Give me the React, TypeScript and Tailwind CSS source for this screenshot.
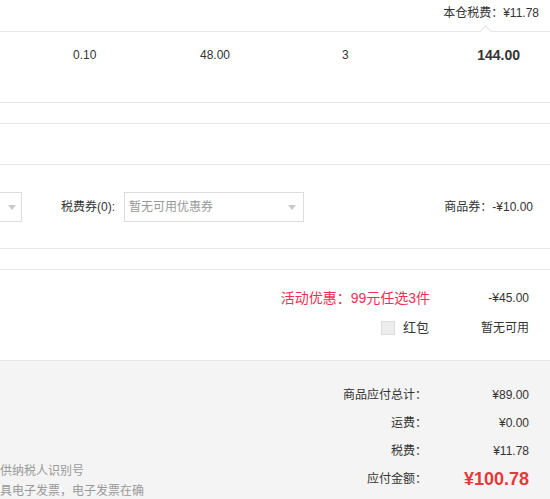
import React from "react";

const FONT = { fontFamily: '"Liberation Sans", Arial, "Noto Sans CJK SC", sans-serif' };

function Caret() {
    return (
        <svg width="8" height="5" viewBox="0 0 8 5" className="shrink-0">
            <path d="M0 0 L8 0 L4 5 Z" fill="#c9c9c9" />
        </svg>
    );
}

function SummaryRow({ label, value, big }: { label: string; value: string; big?: boolean }) {
    return (
        <div className="h-[28px] flex items-center">
            <div className="w-[120px] text-right text-[12px] text-[#333]">{label}</div>
            <div className={`w-[102px] text-right ${big ? "text-[18px] font-bold text-[#e4393c]" : "text-[12px] text-[#333]"}`}>
                {value}
            </div>
        </div>
    );
}

export default function App() {
    return (
        <div className="w-[550px] h-[499px] overflow-hidden bg-white text-[#333] text-[12px] leading-[18px]" style={FONT}>
            {/* tax header */}
            <div className="relative h-[32px] border-b border-[#e6e6e6] flex items-center justify-end pr-[11px] pb-[9px] pt-[3px]">
                <span>本仓税费：¥11.78</span>
                <div className="absolute left-[480px] bottom-[-1px] w-[11px] h-[7px] overflow-hidden">
                    <div className="absolute left-[1px] top-[2px] w-[9px] h-[9px] rotate-45 bg-white border-l border-t border-[#e0e0e0]" />
                </div>
            </div>

            {/* item row */}
            <div className="h-[71px] border-b border-[#e6e6e6] flex items-start pt-[14px]">
                <div className="w-[73px]" />
                <div className="w-[127px]">0.10</div>
                <div className="w-[142px]">48.00</div>
                <div className="flex-1">3</div>
                <div className="pr-[30px] text-[14px] font-bold">144.00</div>
            </div>

            <div className="h-[21px] border-b border-[#e6e6e6]" />
            <div className="h-[41px] border-b border-[#e6e6e6]" />

            {/* coupons */}
            <div className="h-[84px] border-b border-[#e6e6e6] pt-[27px]">
                <div className="flex items-center h-[30px]">
                    <div className="w-[22px] h-[30px] border border-l-0 border-[#ddd] flex items-center justify-end pr-[5px]">
                        <Caret />
                    </div>
                    <div className="ml-[39px] w-[63px]">税费券(0):</div>
                    <div className="w-[180px] h-[30px] border border-[#ddd] flex items-center justify-between pl-[4px] pr-[7px] text-[#999]">
                        <span>暂无可用优惠券</span>
                        <Caret />
                    </div>
                    <div className="flex-1 text-right pr-[17px]">商品券：-¥10.00</div>
                </div>
            </div>

            <div className="h-[21px] border-b border-[#e6e6e6]" />

            {/* promotions */}
            <div className="h-[91px] border-b border-[#e6e6e6] pt-[19px] flex flex-col items-end pr-[21px]">
                <div className="flex items-center h-[18px]">
                    <span className="text-[14px] text-[#ef2f55]">活动优惠：99元任选3件</span>
                    <span className="w-[99px] text-right">-¥45.00</span>
                </div>
                <div className="flex items-center h-[18px] mt-[12px]">
                    <span className="w-[14px] h-[14px] bg-[#ececec] border border-[#dcdcdc] mr-[8px]" />
                    <span className="text-[13px] mr-[1px]">红包</span>
                    <span className="w-[99px] text-right">暂无可用</span>
                </div>
            </div>

            {/* totals */}
            <div className="bg-[#f4f4f4] h-[140px] flex justify-between">
                <div className="w-[160px] pt-[100px] leading-[20px] text-[#999] whitespace-nowrap">
                    <div>供纳税人识别号</div>
                    <div>具电子发票，电子发票在确</div>
                </div>
                <div className="pt-[20px] pr-[21px]">
                    <SummaryRow label="商品应付总计：" value="¥89.00" />
                    <SummaryRow label="运费：" value="¥0.00" />
                    <SummaryRow label="税费：" value="¥11.78" />
                    <SummaryRow label="应付金额：" value="¥100.78" big />
                </div>
            </div>
        </div>
    );
}
